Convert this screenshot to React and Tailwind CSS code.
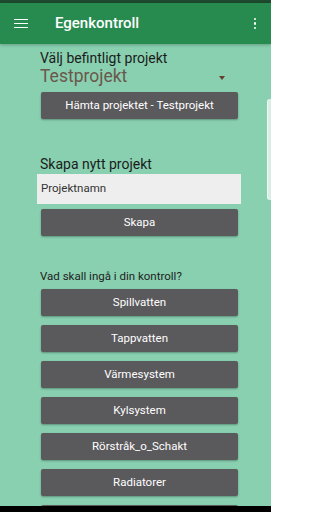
const ITEMS = ['Spillvatten', 'Tappvatten', 'Värmesystem', 'Kylsystem', 'Rörstråk_o_Schakt', 'Radiatorer', '']

function DarkButton({ children, className = '' }) {
  return (
    <button
      className={`ml-[4px] flex h-[27px] w-[197px] shrink-0 items-center justify-center rounded-[2px] bg-[#5a595c] text-[11.5px] text-white shadow-[0_1px_2px_rgba(0,0,0,0.3)] ${className}`}
    >
      {children}
    </button>
  )
}

export default function App() {
  return (
    <div
      className="relative h-[512px] w-[271px] overflow-hidden bg-[#88d0b0]"
      style={{ fontFamily: 'Roboto, "Liberation Sans", sans-serif' }}
    >
      {/* status + app bar */}
      <div className="h-[3px] bg-[#1d4a2e]" />
      <div className="relative z-10 flex h-[41px] items-center bg-[#278b4f] shadow-[0_1px_3px_rgba(0,0,0,0.25)]">
        <div className="ml-[14px] flex w-[14px] flex-col gap-[2.3px]">
          <span className="h-[1.8px] bg-white" />
          <span className="h-[1.8px] bg-white" />
          <span className="h-[1.8px] bg-white" />
        </div>
        <span className="ml-[27px] text-[15px] font-medium text-white">Egenkontroll</span>
        <div className="ml-auto mr-[15px] flex flex-col gap-[2px]">
          <span className="h-[2.5px] w-[2.5px] rounded-full bg-white" />
          <span className="h-[2.5px] w-[2.5px] rounded-full bg-white" />
          <span className="h-[2.5px] w-[2.5px] rounded-full bg-white" />
        </div>
      </div>

      <div className="ml-[37px] w-[204px]">
        {/* existing project */}
        <p className="mt-[6px] pl-[3px] text-[14px] leading-[16px] text-[#1c1c1c]">Välj befintligt projekt</p>
        <div className="flex items-center pl-[3px]">
          <span className="text-[17.5px] leading-[21px] text-[#6b574c]">Testprojekt</span>
          <span className="ml-auto mr-[16px] mt-[2px] h-0 w-0 border-x-[3.5px] border-t-[4px] border-x-transparent border-t-[#6b3b30]" />
        </div>
        <DarkButton className="mt-[5px]">Hämta projektet - Testprojekt</DarkButton>

        {/* new project */}
        <p className="mt-[37px] pl-[3px] text-[14px] leading-[16px] text-[#1c1c1c]">Skapa nytt projekt</p>
        <div className="mt-[2px] flex h-[30px] items-center bg-[#eeeeee] pl-[4px] text-[11.5px] text-[#333]">
          Projektnamn
        </div>
        <DarkButton className="mt-[5px]">Skapa</DarkButton>

        {/* checklist */}
        <p className="mt-[33px] pl-[3px] text-[11.5px] leading-[14px] text-[#222]">Vad skall ingå i din kontroll?</p>
        <div className="mt-[6px] flex flex-col gap-[9px]">
          {ITEMS.map((item, i) => (
            <DarkButton key={i}>{item}</DarkButton>
          ))}
        </div>
      </div>

      {/* edge of side panel */}
      <div className="absolute right-0 top-[99px] h-[101px] w-[4px] rounded-l-[3px] border-l border-[#f2faf6] bg-[#d9efe4]" />

      {/* nav bar */}
      <div className="absolute bottom-0 left-0 h-[6px] w-full bg-black" />
    </div>
  )
}
